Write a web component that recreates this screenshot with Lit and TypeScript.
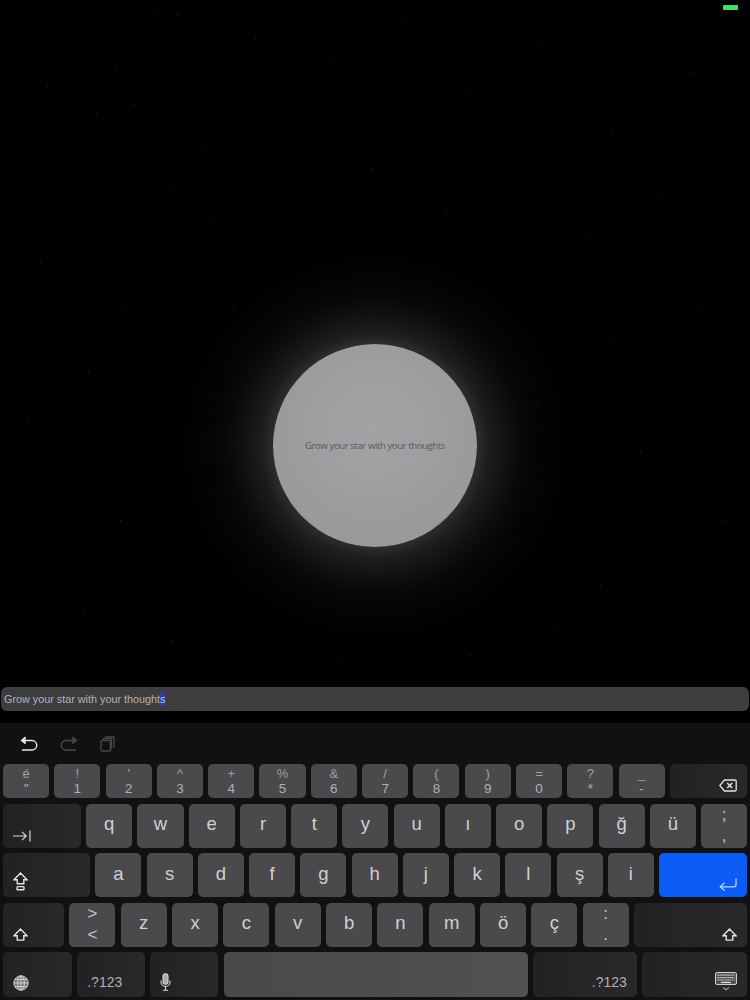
import { LitElement, html, css, svg } from "lit";
import { customElement } from "lit/decorators.js";

type Key = { w: number; t?: string; b?: string; l?: string; kind?: string; icon?: string; txt?: string; side?: string };

const num = (t: string, b: string): Key => ({ w: 46, t, b });
const ch = (l: string): Key => ({ w: 46, l });
const wide = (t: string, b: string): Key => ({ w: 46, t, b, kind: "wide" });

const ROWS: { h: number; keys: Key[] }[] = [
  {
    h: 34,
    keys: [
      num("é", "\u2033"), num("!", "1"), num("\u2032", "2"), num("^", "3"), num("+", "4"), num("%", "5"), num("&", "6"),
      num("/", "7"), num("(", "8"), num(")", "9"), num("=", "0"), num("?", "*"), num("_", "-"),
      { w: 77, kind: "dark", icon: "del", side: "right" },
    ],
  },
  {
    h: 44,
    keys: [
      { w: 78, kind: "dark", icon: "tab", side: "left" },
      ch("q"), ch("w"), ch("e"), ch("r"), ch("t"), ch("y"), ch("u"), ch("ı"), ch("o"), ch("p"), ch("ğ"), ch("ü"),
      wide(";", ","),
    ],
  },
  {
    h: 44,
    keys: [
      { w: 87, kind: "dark", icon: "lock", side: "left" },
      ch("a"), ch("s"), ch("d"), ch("f"), ch("g"), ch("h"), ch("j"), ch("k"), ch("l"), ch("ş"), ch("i"),
      { w: 88, kind: "blue", icon: "ret", side: "right" },
    ],
  },
  {
    h: 44,
    keys: [
      { w: 61, kind: "dark", icon: "shift", side: "left" },
      wide(">", "<"),
      ch("z"), ch("x"), ch("c"), ch("v"), ch("b"), ch("n"), ch("m"), ch("ö"), ch("ç"),
      wide(":", "."),
      { w: 113, kind: "dark", icon: "shift", side: "right" },
    ],
  },
  {
    h: 45,
    keys: [
      { w: 69, kind: "dark", icon: "globe", side: "left" },
      { w: 68, kind: "dark", txt: ".?123", side: "left" },
      { w: 68, kind: "dark", icon: "mic", side: "left" },
      { w: 304, kind: "space" },
      { w: 104, kind: "dark", txt: ".?123", side: "right" },
      { w: 105, kind: "dark", icon: "kbd", side: "right" },
    ],
  },
];

const SPECKS = [
  [158, 11], [177, 15], [255, 38], [116, 66], [47, 86], [134, 104], [96, 113], [203, 150], [170, 186], [210, 220],
  [330, 60], [402, 22], [468, 94], [540, 41], [612, 130], [690, 72], [372, 168], [446, 214], [585, 236], [660, 198],
  [40, 262], [122, 310], [88, 372], [233, 305], [28, 418], [225, 458], [262, 497], [172, 640], [84, 610], [556, 630],
  [530, 338], [537, 402], [610, 340], [700, 310], [640, 452], [722, 520], [600, 585], [470, 655], [340, 662], [120, 520],
];

const ICONS: Record<string, unknown> = {
  del: html`<svg width="18" height="13" viewBox="0 0 18 13" fill="none" stroke="#e4e4e6" stroke-width="1.3"><path d="M5.5 1H16a1.2 1.2 0 0 1 1.2 1.2v8.6A1.2 1.2 0 0 1 16 12H5.5L.8 6.5z"/><path d="M8.2 4l5 5M13.2 4l-5 5" stroke-width="1.5"/></svg>`,
  tab: html`<svg width="18" height="12" viewBox="0 0 18 12" fill="none" stroke="#d8d8da" stroke-width="1.2"><path d="M0 6h13M9 1.8 13.2 6 9 10.2M17 .5v11"/></svg>`,
  lock: html`<svg width="15" height="19" viewBox="0 0 15 19" fill="none" stroke="#e4e4e6" stroke-width="1.4"><path d="M7.5 1 1 7.7h3.2v4h6.6v-4H14z"/><rect x="4" y="14.6" width="7" height="3.2" rx=".8"/></svg>`,
  shift: html`<svg width="15" height="13" viewBox="0 0 15 13" fill="none" stroke="#e4e4e6" stroke-width="1.4"><path d="M7.5 1 1 7.7h3.2v4.4h6.6V7.7H14z"/></svg>`,
  ret: html`<svg width="18" height="13" viewBox="0 0 18 13" fill="none" stroke="#b9d3ff" stroke-width="1.3"><path d="M17 .5v6.3a2 2 0 0 1-2 2H1.5M5.6 4.6 1.2 8.8l4.4 3.6"/></svg>`,
  globe: html`<svg width="16" height="16" viewBox="0 0 16 16" fill="none" stroke="#d8d8da" stroke-width=".9"><circle cx="8" cy="8" r="7.2" fill="#77777a"/><ellipse cx="8" cy="8" rx="3.3" ry="7.2"/><path d="M8 .8v14.4M.8 8h14.4M1.8 4.4h12.4M1.8 11.6h12.4"/></svg>`,
  mic: html`<svg width="11" height="18" viewBox="0 0 11 18" fill="none" stroke="#d8d8da" stroke-width="1.1"><rect x="3" y=".7" width="5" height="10.5" rx="2.5" fill="#a8a8aa"/><path d="M1 7.5v1.4a4.5 4.5 0 0 0 9 0V7.5M5.5 13.4v3.6M3 17.2h5"/></svg>`,
  kbd: html`<svg width="22" height="19" viewBox="0 0 22 19" fill="none"><rect x=".6" y=".6" width="20.8" height="11.8" rx="1.2" fill="#4a4a4c" stroke="#e0e0e2"/><path d="M2.5 3.2h17M2.5 5.6h17M2.5 8h17" stroke="#e0e0e2" stroke-width="1.2" stroke-dasharray="1.3 .7"/><path d="M6 10.4h10" stroke="#e0e0e2" stroke-width="1.2"/><path d="m8 15.4 3 2.4 3-2.4" stroke="#a8a8aa" stroke-width="1.1"/></svg>`,
};

@customElement("app-root")
export class AppRoot extends LitElement {
  static styles = css`
    :host {
      display: block;
      width: 750px;
      height: 1000px;
      background: #000;
      overflow: hidden;
      position: relative;
      font-family: "Liberation Sans", Arial, sans-serif;
    }
    .battery {
      position: absolute;
      top: 5px;
      right: 12px;
      width: 15px;
      height: 5px;
      border-radius: 1px;
      background: #4cd964;
    }
    .specks {
      position: absolute;
      inset: 0;
    }
    .sky {
      position: relative;
      height: 687px;
      box-sizing: border-box;
      padding-top: 344px;
      display: flex;
      justify-content: center;
      align-items: flex-start;
      overflow: hidden;
      background: #010102;
    }
    .star {
      position: relative;
      width: 204px;
      height: 203px;
      border-radius: 50%;
      background: radial-gradient(circle at 50% 42%, #a3a3a5 0%, #9c9c9e 55%, #959597 100%);
      box-shadow: 0 0 18px 1px rgba(255, 255, 255, 0.08), 0 0 55px 12px rgba(200, 200, 205, 0.19), 0 0 95px 30px rgba(150, 150, 155, 0.16);
      display: flex;
      align-items: center;
      justify-content: center;
      font-family: "Open Sans", sans-serif;
      font-size: 9.6px;
      letter-spacing: -0.42px;
      color: #5a5a5c;
      white-space: nowrap;
    }
    .field-wrap {
      height: 36px;
      padding: 0 1px;
      box-sizing: border-box;
      background: #000;
    }
    .field {
      height: 24px;
      border-radius: 6px;
      background: #3d3d3f;
      display: flex;
      align-items: center;
      padding-left: 3px;
      font-size: 10.8px;
      color: #b4b4b6;
      white-space: nowrap;
    }
    .sel {
      background: #2f3f9e;
      color: #c0c0e8;
      line-height: 14px;
    }
    .kb {
      background: #111113;
      height: 277px;
      box-sizing: border-box;
      padding: 0 3px;
      display: flex;
      flex-direction: column;
    }
    .tools {
      height: 41px;
      display: flex;
      align-items: center;
      gap: 22px;
      padding-left: 17px;
      flex: none;
    }
    .rows {
      display: flex;
      flex-direction: column;
      gap: 5.6px;
    }
    .row {
      display: flex;
      gap: 5.2px;
    }
    .key {
      min-width: 0;
      box-sizing: border-box;
      border-radius: 5px;
      background: #4a4a4c;
      color: #d0d0d2;
      display: flex;
      flex-direction: column;
      align-items: center;
      justify-content: center;
    }
    .letter {
      font-size: 18.5px;
      line-height: 22px;
      margin-top: -3px;
    }
    .top {
      font-size: 13px;
      line-height: 14px;
      color: #a0a0a2;
    }
    .bottom {
      font-size: 13.5px;
      line-height: 15px;
      color: #b0b0b2;
    }
    .wide {
      gap: 7px;
    }
    .wide .top,
    .wide .bottom {
      font-size: 17px;
      line-height: 14px;
      color: #c8c8ca;
    }
    .dark {
      background: linear-gradient(90deg, #222224, #29292b);
      flex-direction: row;
      align-items: flex-end;
    }
    .blue {
      background: #0a5cf5;
      flex-direction: row;
      align-items: flex-end;
    }
    .left {
      justify-content: flex-start;
      padding: 0 0 6px 10px;
    }
    .right {
      justify-content: flex-end;
      padding: 0 10px 6px 0;
    }
    .txt {
      font-size: 14px;
      line-height: 17px;
      color: #b0b0b2;
    }
    .space {
      background: linear-gradient(90deg, #49494b, #515153);
    }
    svg {
      display: block;
    }
  `;

  private renderKey(k: Key) {
    const cls = ["key", k.kind ?? "", k.side ?? ""].join(" ");
    return html`<div class=${cls} style="flex:1 1 ${k.w}px">
      ${k.l ? html`<span class="letter">${k.l}</span>` : ""}
      ${k.t ? html`<span class="top">${k.t}</span><span class="bottom">${k.b}</span>` : ""}
      ${k.icon ? ICONS[k.icon] : ""}
      ${k.txt ? html`<span class="txt">${k.txt}</span>` : ""}
    </div>`;
  }

  render() {
    return html`
      <div class="sky">
        <div class="star">Grow your star with your thoughts</div>
        <svg class="specks" width="750" height="687">
          ${SPECKS.map(([x, y]) => svg`<rect x=${x} y=${y} width="1" height="1" fill="#2c2c2e"></rect>`)}
        </svg>
      </div>
      <div class="battery"></div>
      <div class="field-wrap">
        <div class="field">Grow your star with your thought<span class="sel">s</span></div>
      </div>
      <div class="kb">
        <div class="tools">
          <svg width="18" height="16" viewBox="0 0 18 16" fill="none" stroke="#e8e8ea" stroke-width="1.4"><path d="M2 4.5h10a4.2 4.2 0 0 1 0 9.5H2"/><path d="M5.6 1 1.6 4.5l4 3.2" fill="#e8e8ea"/></svg>
          <svg width="18" height="16" viewBox="0 0 18 16" fill="none" stroke="#48484a" stroke-width="1.4"><path d="M16 4.5H6a4.2 4.2 0 0 0 0 9.5h10"/><path d="m12.4 1 4 3.5-4 3.2" fill="#48484a"/></svg>
          <svg width="15" height="16" viewBox="0 0 15 16" fill="none" stroke="#48484a" stroke-width="1.3"><rect x="1" y="4.5" width="9.5" height="10.5" rx="1"/><path d="M3.5 4V2.6h8V12h-1M6 2V1h8v9.5h-1"/></svg>
        </div>
        <div class="rows">
          ${ROWS.map((r) => html`<div class="row" style="height:${r.h}px">${r.keys.map((k) => this.renderKey(k))}</div>`)}
        </div>
      </div>
    `;
  }
}
